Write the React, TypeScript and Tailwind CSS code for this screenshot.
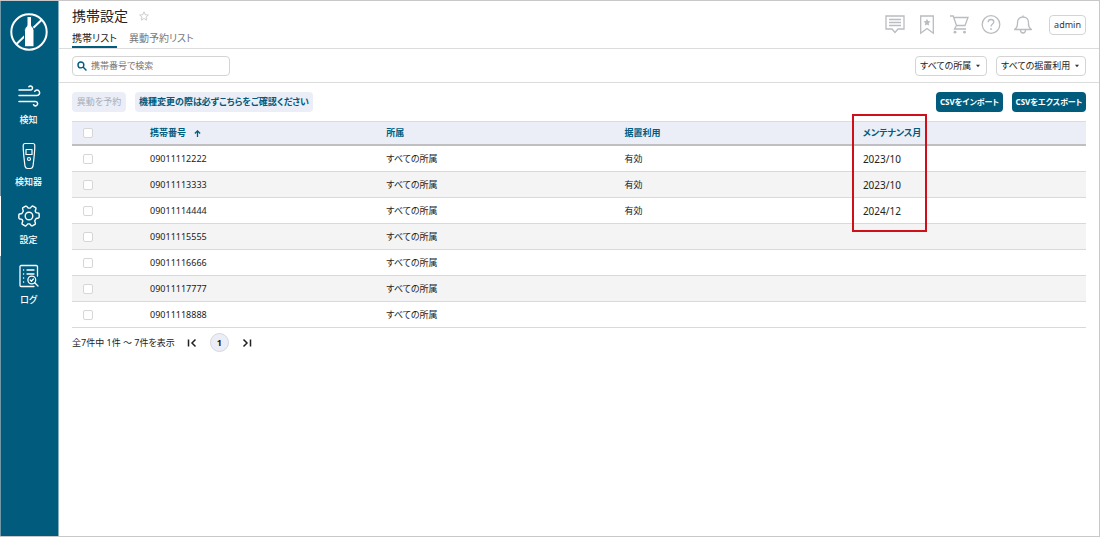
import type { ReactNode } from 'react'
import { clsx } from 'clsx'

type Phone = {
  number: string
  group: string
  fixed?: string
  month?: string
}

const phones: Phone[] = [
  { number: '09011112222', group: 'すべての所属', fixed: '有効', month: '2023/10' },
  { number: '09011113333', group: 'すべての所属', fixed: '有効', month: '2023/10' },
  { number: '09011114444', group: 'すべての所属', fixed: '有効', month: '2024/12' },
  { number: '09011115555', group: 'すべての所属' },
  { number: '09011116666', group: 'すべての所属' },
  { number: '09011117777', group: 'すべての所属' },
  { number: '09011118888', group: 'すべての所属' },
]

function Logo() {
  return (
    <svg viewBox="0 0 38 38" className="h-[38px] w-[38px]" aria-hidden="true">
      <circle cx="19" cy="19" r="17.7" fill="none" stroke="#fff" strokeWidth="2" />
      <path d="M31.500 7 6.500 31" stroke="#fff" strokeWidth="2" />
      <path
        d="M17 3.500h4.500V12c0 2 2.500 2.500 2.500 5.500v16.300h-9.500V17.500c0-3 2.500-3.500 2.500-5.500z"
        fill="#fff"
        stroke="#005b7d"
        strokeWidth="1"
      />
    </svg>
  )
}

function WindIcon() {
  return (
    <svg viewBox="0 0 24 24" className="h-6 w-6" fill="none" stroke="currentColor" strokeWidth="1.5" strokeLinecap="round">
      <path d="M2 6h11.500a2 2 0 1 0-1.600-3.200" />
      <path d="M2 11.500h18a2.700 2.700 0 1 0-2.300-4.200" />
      <path d="M2 17.500h16.500a2.200 2.200 0 1 1-2 3.200" />
    </svg>
  )
}

function DetectorIcon() {
  return (
    <svg viewBox="0 0 24 28" className="h-7 w-6" fill="none" stroke="currentColor" strokeWidth="1.2" strokeLinejoin="round">
      <path d="M8.200 1.500h7.600c1.300 0 2 .8 2 2 0 7-.8 12-1.700 20-.2 2-1.200 3-2.800 3h-2.600c-1.600 0-2.600-1-2.800-3C7 15.500 6.200 10.500 6.200 3.500c0-1.200.7-2 2-2z" />
      <path d="M9 7.500h6v5H9z" />
      <circle cx="12" cy="17" r="1.500" />
    </svg>
  )
}

function GearIcon() {
  return (
    <svg viewBox="0 0 24 24" className="h-6 w-6" fill="none" stroke="currentColor" strokeWidth="1.4" strokeLinejoin="round">
      <path
        transform="rotate(30 12 12)"
        d="M10.500 1.500h3c.6 0 .8.300.9.800l.5 2.300 1.500.9 2.200-.7c.5-.2.900 0 1.200.4l1.500 2.600c.3.500.2.800-.2 1.200l-1.700 1.600v2.800l1.700 1.600c.4.400.5.700.2 1.200l-1.500 2.600c-.3.400-.7.600-1.200.4l-2.200-.7-1.500.9-.5 2.300c-.1.500-.3.800-.9.800h-3c-.6 0-.8-.3-.9-.8l-.5-2.300-1.500-.9-2.200.7c-.5.2-.9 0-1.200-.4l-1.500-2.600c-.3-.5-.2-.8.2-1.200l1.700-1.600v-2.800L2.900 9c-.4-.4-.5-.7-.2-1.200l1.500-2.600c.3-.4.7-.6 1.200-.4l2.200.7 1.500-.9.500-2.300c.1-.5.300-.8.900-.8z"
      />
      <circle cx="12" cy="12" r="3.800" />
    </svg>
  )
}

function LogIcon() {
  return (
    <svg viewBox="0 0 24 24" className="h-6 w-6" fill="none" stroke="currentColor" strokeWidth="1.3" strokeLinecap="round">
      <path d="M20.500 12V2.700c0-.7-.5-1.200-1.200-1.200H4.200c-.7 0-1.200.5-1.200 1.200v18.600c0 .7.500 1.200 1.200 1.200H17" />
      <path d="M6.500 6h.2M10 6h7M6.500 10h.2M10 10h7M6.500 14h.2M6.500 18h.2" />
      <circle cx="14.800" cy="16" r="3.900" />
      <path d="m17.700 18.800 3.300 3.200M13.200 16l1.200 1.200 2-2.200" />
    </svg>
  )
}

type NavItemProps = {
  label: string
  icon: ReactNode
  active?: boolean
}

function NavItem({ label, icon, active }: NavItemProps) {
  return (
    <a
      href="#"
      className={clsx(
        'flex h-[60px] w-full flex-col items-center justify-center gap-1 border-l pr-[2px] text-[9px] leading-4 font-medium text-white',
        active ? 'border-white' : 'border-[#6f98a9]',
      )}
    >
      {icon}
      <span>{label}</span>
    </a>
  )
}

function Sidebar() {
  return (
    <aside className="flex w-[59px] shrink-0 flex-col border-r border-r-[#86b1c1] bg-[#005b7d]">
      <a href="#" aria-label="ホーム" className="flex h-[75px] justify-center border-l border-[#6f98a9] pt-3 pr-[2px]">
        <Logo />
      </a>
      <nav className="flex flex-col">
        <NavItem label="検知" icon={<WindIcon />} />
        <NavItem label="検知器" icon={<DetectorIcon />} />
        <NavItem label="設定" icon={<GearIcon />} active />
        <NavItem label="ログ" icon={<LogIcon />} />
      </nav>
      <div className="flex-1 border-l border-[#6f98a9]" />
    </aside>
  )
}

function HeaderButton({ label, children }: { label: string; children: ReactNode }) {
  return (
    <button type="button" aria-label={label} className="text-[#b9bcc1]">
      <svg viewBox="0 0 20 20" className="h-5 w-5" fill="none" stroke="currentColor" strokeWidth="1.3">
        {children}
      </svg>
    </button>
  )
}

function Header() {
  return (
    <header className="flex h-12 justify-between border-b border-[#dcdcdc] px-[13px]">
      <div className="flex flex-col justify-between">
        <div className="flex items-center gap-[11px] pt-[5px]">
          <h1 className="text-sm leading-5 text-[#222]">携帯設定</h1>
          <button type="button" aria-label="お気に入り" className="text-[#c4c4c4]">
            <svg viewBox="0 0 24 24" className="h-[10px] w-[10px]" fill="none" stroke="currentColor" strokeWidth="2">
              <path d="m12 2 3 7 7.500.6-5.700 5 1.800 7.400L12 18l-6.600 4 1.800-7.400-5.700-5L9 9z" />
            </svg>
          </button>
        </div>
        <nav className="flex gap-3 text-[10px] leading-5">
          <a href="#" className="h-5 border-b-2 border-[#005b7d] text-[#222]">
            携帯リスト
          </a>
          <a href="#" className="h-5 text-[#777]">
            異動予約リスト
          </a>
        </nav>
      </div>

      <div className="flex items-center gap-3">
        <HeaderButton label="メッセージ">
          <path d="M1 1h18v13h-6l-3 3.500L7 14H1z" />
          <path d="M4 4.500h12M4 7.500h12M4 10.500h12" />
        </HeaderButton>
        <HeaderButton label="ブックマーク">
          <path d="M3.700 1h12.600v17.300L10 13.500l-6.300 4.800z" />
          <path
            d="m10 3.800 1.100 2.300 2.500.3-1.900 1.700.5 2.500-2.200-1.200-2.200 1.200.5-2.500-1.900-1.700 2.500-.3z"
            fill="currentColor"
            stroke="none"
          />
        </HeaderButton>
        <HeaderButton label="カート">
          <path d="M1 1h3.200l3.300 9.500L5.500 14H17M4.900 2.500H19l-3 8H7.500" />
          <circle cx="6" cy="17.200" r="1.400" fill="currentColor" stroke="none" />
          <circle cx="15.500" cy="17.200" r="1.400" fill="currentColor" stroke="none" />
        </HeaderButton>
        <HeaderButton label="ヘルプ">
          <circle cx="10" cy="9.500" r="8.800" />
          <path d="M7.200 7.300c0-1.700 1.200-2.800 2.800-2.800s2.800 1 2.800 2.500c0 2-2.800 2.200-2.800 4.500" />
          <circle cx="10" cy="14" r=".9" fill="currentColor" stroke="none" />
        </HeaderButton>
        <HeaderButton label="通知">
          <path d="M10 .5v1.500M1.500 14.500c2.300-1.300 3-3 3-5.500V7.500C4.500 4.300 6.800 2 10 2s5.500 2.300 5.500 5.500V9c0 2.500.7 4.200 3 5.500z" strokeLinejoin="round" />
          <path d="M7.500 15c0 2 1 3 2.500 3s2.500-1 2.500-3" />
        </HeaderButton>
        <button
          type="button"
          className="ml-1 h-5 rounded border border-[#d4d4d4] px-1 text-[9px] leading-4 text-[#333]"
        >
          admin
        </button>
      </div>
    </header>
  )
}

function FilterSelect({ label, text, className }: { label: string; text: string; className: string }) {
  return (
    <div className={clsx('relative', className)}>
      <select
        aria-label={label}
        className="block h-5 w-full appearance-none rounded border border-[#d4d4d4] bg-white pr-3 pl-1 text-[9px] text-[#222]"
      >
        <option>{text}</option>
      </select>
      <svg viewBox="0 0 6 4" className="pointer-events-none absolute top-2 right-[6px] h-1 w-[6px]" aria-hidden="true">
        <path d="M1 .8h4L3 3.200z" fill="#333" />
      </svg>
    </div>
  )
}

function FilterBar() {
  return (
    <div className="flex h-[34px] items-center justify-between border-b border-[#dcdcdc] px-[13px]">
      <label className="flex h-5 w-[158px] items-center gap-1 rounded border border-[#d4d4d4] px-1">
        <svg viewBox="0 0 12 12" className="h-[10px] w-[10px] shrink-0" fill="none" stroke="#005b7d" strokeWidth="1.700" aria-hidden="true">
          <circle cx="4.700" cy="4.700" r="3.500" />
          <path d="m7.300 7.300 4 4" />
        </svg>
        <input
          type="text"
          aria-label="携帯番号で検索"
          placeholder="携帯番号で検索"
          className="w-full min-w-0 text-[9px] text-[#222] outline-none placeholder:text-[#777]"
        />
      </label>
      <div className="flex gap-[9px]">
        <FilterSelect label="所属" text="すべての所属" className="w-[72px]" />
        <FilterSelect label="据置利用" text="すべての据置利用" className="w-[90px]" />
      </div>
    </div>
  )
}

function ActionBar() {
  return (
    <div className="flex justify-between text-[9px] leading-4 whitespace-nowrap">
      <div className="flex gap-[9px]">
        <button type="button" disabled className="h-5 w-[54px] rounded bg-[#ebeef6] text-[#a9adb3]">
          異動を予約
        </button>
        <button type="button" className="h-5 w-[178px] rounded bg-[#ebeef6] font-bold text-[#005b7d]">
          機種変更の際は必ずこちらをご確認ください
        </button>
      </div>
      <div className="flex gap-[9px] text-[8px]">
        <button type="button" className="h-5 w-[67px] rounded bg-[#005b7d] font-bold text-white">
          CSVをインポート
        </button>
        <button type="button" className="h-5 w-[74px] rounded bg-[#005b7d] font-bold text-white">
          CSVをエクスポート
        </button>
      </div>
    </div>
  )
}

function Check({ label }: { label: string }) {
  return (
    <input
      type="checkbox"
      aria-label={label}
      className="ml-[11px] block h-[10px] w-[10px] appearance-none rounded-[2px] border border-[#d6d6d6] bg-white checked:bg-[#005b7d]"
    />
  )
}

function PhoneTable() {
  return (
    <table className="mt-[9px] w-full table-fixed border-separate border-spacing-0 text-left text-[9px] leading-4">
      <colgroup>
        <col className="w-[7.7%]" />
        <col className="w-[23.3%]" />
        <col className="w-[23.5%]" />
        <col className="w-[23.5%]" />
        <col className="w-[22%]" />
      </colgroup>
      <thead>
        <tr className="h-[25px] bg-[#ebeef6] text-[#005b7d] [&>th]:border-t [&>th]:border-b-2 [&>th]:border-t-[#dcdcdc] [&>th]:border-b-[#bfbfc2] [&>th]:p-0">
          <th>
            <Check label="すべて選択" />
          </th>
          <th aria-sort="ascending">
            <span className="flex items-center gap-2">
              携帯番号
              <svg viewBox="0 0 8 8" className="h-[7px] w-[7px]" fill="none" stroke="currentColor" strokeWidth="1.500" aria-hidden="true">
                <path d="M4 8V1M1 4l3-3 3 3" />
              </svg>
            </span>
          </th>
          <th>所属</th>
          <th>据置利用</th>
          <th className="relative">
            メンテナンス月
            {/* 強調枠 */}
            <span className="pointer-events-none absolute -top-2 -left-[11px] h-[118px] w-[75px] border-2 border-[#d01018]" />
          </th>
        </tr>
      </thead>
      <tbody className="text-[#222]">
        {phones.map((phone) => (
          <tr
            key={phone.number}
            className="h-[26px] even:bg-[#f4f4f4] [&>td]:border-b [&>td]:border-[#d9d9d9] [&>td]:p-0"
          >
            <td>
              <Check label={phone.number} />
            </td>
            <td>{phone.number}</td>
            <td>{phone.group}</td>
            <td>{phone.fixed}</td>
            <td className="text-[10px]">{phone.month}</td>
          </tr>
        ))}
      </tbody>
    </table>
  )
}

function Pagination() {
  return (
    <div className="mt-[5px] flex items-center text-[9px] leading-4 text-[#222]">
      <span>全7件中 1件 ～ 7件を表示</span>
      <nav className="ml-3 flex items-center gap-[13px]">
        <button type="button" aria-label="最初のページ">
          <svg viewBox="0 0 10 10" className="h-[10px] w-[10px]" fill="none" stroke="currentColor" strokeWidth="1.500">
            <path d="M1.500 1.500v7M8.500 1.500 5 5l3.500 3.500" />
          </svg>
        </button>
        <button type="button" className="h-[19px] w-[19px] rounded-full border border-[#d4d7de] bg-[#ebeef6] font-bold">
          1
        </button>
        <button type="button" aria-label="最後のページ">
          <svg viewBox="0 0 10 10" className="h-[10px] w-[10px]" fill="none" stroke="currentColor" strokeWidth="1.500">
            <path d="M8.500 1.500v7M1.500 1.500 5 5 1.500 8.500" />
          </svg>
        </button>
      </nav>
    </div>
  )
}

export default function App() {
  return (
    <div
      lang="ja"
      className="flex min-h-screen border-y border-r border-[#c8c8c8] bg-white font-['Noto_Sans','Noto_Sans_CJK_JP',sans-serif] [font-feature-settings:'palt']"
    >
      <Sidebar />
      <div className="min-w-0 flex-1">
        <Header />
        <FilterBar />
        <main className="px-[13px] pt-[9px]">
          <ActionBar />
          <PhoneTable />
          <Pagination />
        </main>
      </div>
    </div>
  )
}
